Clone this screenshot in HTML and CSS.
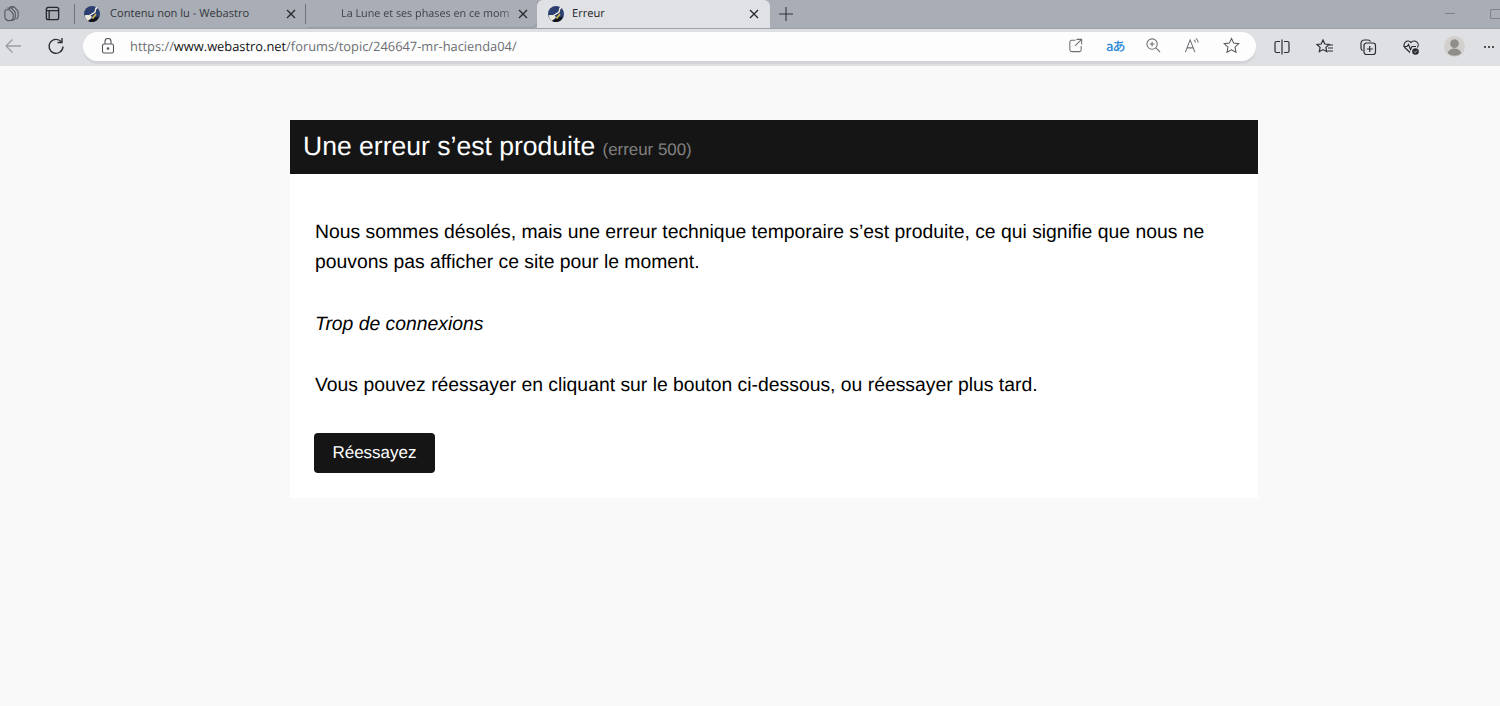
FILE: index.html
```html
<!DOCTYPE html>
<html lang="fr">
<head>
<meta charset="utf-8">
<title>Erreur</title>
<link rel="stylesheet" href="styles.css">
</head>
<body>
<svg class="defs" width="0" height="0" aria-hidden="true">
  <symbol id="fav" viewBox="0 0 18 18">
    <circle cx="9" cy="9" r="8" fill="#2b3f70"/>
    <path d="M1.500 10.500c3-1 6-.5 7.500 1.500l-3 4.300C3.500 15.500 2 13 1.500 10.500z" fill="#e9e6da"/>
    <path d="M5 15.500c3-2 7-3 11-4-1 3-3.500 5.500-7 5.500-1.500 0-3-.5-4-1.500z" fill="#14141a"/>
    <path d="M5 11.500 12 7l1-4" stroke="#f2efe2" stroke-width="1.300" fill="none"/>
    <path d="M9.500 13.500 13 9" stroke="#d9bf3f" stroke-width="1.500" fill="none"/>
    <circle cx="13.500" cy="3" r="1" fill="#f4f0e0"/>
  </symbol>
  <symbol id="close" viewBox="0 0 10 10">
    <path d="M1 1l8 8M9 1l-8 8" stroke="currentColor" stroke-width="1.300" fill="none"/>
  </symbol>
</svg>
<header class="browser">
  <div class="tabstrip">
    <div class="strip-tools">
      <svg class="icon-strip" viewBox="0 0 18 18" fill="none" stroke="#55585e" stroke-width="1.200"><path d="M6 4.500 8 2h3.500l-1 0"/><path d="M8.500 2H11a2 2 0 0 1 1.500.7l3 3.300a2 2 0 0 1 .5 1.400V12a3.500 3.500 0 0 1-2 3.200"/><path d="M4.500 3.200H8a2 2 0 0 1 1.500.6l3 3.200a2 2 0 0 1 .5 1.400v4.100a3.500 3.500 0 0 1-3.500 3.500"/><path d="M3.500 5H6a2 2 0 0 1 1.500.6l2.800 3a2 2 0 0 1 .5 1.400v3a3.500 3.500 0 0 1-3.500 3.500H6A4 4 0 0 1 2 12.500V6.500A1.500 1.500 0 0 1 3.500 5z"/></svg>
      <svg class="icon-strip" viewBox="0 0 18 18" fill="none" stroke="#26282c" stroke-width="1.400"><rect x="2.500" y="2.500" width="13" height="13" rx="2"/><path d="M2.500 6h13M5.500 6v9.500"/></svg>
    </div>
    <span class="sep"></span>
    <div class="tab tab-one">
      <svg class="fav"><use href="#fav"/></svg>
      <span class="tab-title">Contenu non lu - Webastro</span>
      <svg class="close"><use href="#close"/></svg>
    </div>
    <span class="sep"></span>
    <div class="tab tab-two">
      <span class="tab-title tab-title-fade">La Lune et ses phases en ce mom</span>
      <svg class="close"><use href="#close"/></svg>
    </div>
    <div class="tab tab-active">
      <svg class="fav"><use href="#fav"/></svg>
      <span class="tab-title">Erreur</span>
      <svg class="close"><use href="#close"/></svg>
    </div>
    <svg class="new-tab" viewBox="0 0 14 14" fill="none" stroke="#33363a" stroke-width="1.100"><path d="M7 0v14M0 7h14"/></svg>
    <div class="win-controls">
      <span class="win-min"></span>
      <span class="win-max"></span>
    </div>
  </div>
  <div class="toolbar">
    <svg class="nav-icon nav-back" viewBox="0 0 18 18" fill="none" stroke="#9a9da2" stroke-width="1.300"><path d="M17 9H2M8.500 2.500 2 9l6.500 6.500"/></svg>
    <svg class="nav-icon nav-reload" viewBox="0 0 18 18" fill="none" stroke="#2c2e32" stroke-width="1.400"><path d="M14.500 5A7 7 0 1 0 16 9.500"/><path d="M15 1v4.500h-4.500"/></svg>
    <div class="address">
      <svg class="lock" viewBox="0 0 14 16" fill="none" stroke="#55585c" stroke-width="1.100"><rect x="1.500" y="6" width="11" height="9" rx="1.500"/><path d="M4 6V3.500a3 3 0 0 1 6 0V6"/><circle cx="7" cy="10.500" r=".8" fill="#55585c"/></svg>
      <span class="url">https://<b class="url-host">www.webastro.net</b>/forums/topic/246647-mr-hacienda04/</span>
      <div class="address-icons">
        <svg class="a-icon" viewBox="0 0 18 18" fill="none" stroke="#6b6e72" stroke-width="1.100"><path d="M9 3.500H5a2 2 0 0 0-2 2v8a2 2 0 0 0 2 2h8a2 2 0 0 0 2-2v-4"/><path d="M10 2.500h5.500V8M15.500 2.500 8.500 9.500"/></svg>
        <span class="translate">aあ</span>
        <svg class="a-icon" viewBox="0 0 18 18" fill="none" stroke="#6b6e72" stroke-width="1.100"><circle cx="7.500" cy="7.500" r="5.500"/><path d="M11.500 11.500 16 16M7.500 5v5M5 7.500h5"/></svg>
        <svg class="a-icon" viewBox="0 0 18 18" fill="none" stroke="#6b6e72" stroke-width="1.100"><path d="M1.500 16 6.500 3l5 13M3.300 11.500h6.400"/><path d="M10.500 3c1 .7 1.500 1.600 1.500 2.800M12.500 1.500c1.600 1 2.500 2.500 2.500 4.300"/></svg>
        <svg class="a-icon" viewBox="0 0 18 18" fill="none" stroke="#55585c" stroke-width="1.100"><path d="m9 1.500 2.300 5 5.400.6-4 3.700 1.100 5.400L9 13.500l-4.800 2.700 1.100-5.400-4-3.700 5.400-.6z"/></svg>
      </div>
    </div>
    <div class="tool-icons">
      <svg class="t-icon" viewBox="0 0 18 18" fill="none" stroke="#2c2e32" stroke-width="1.200"><path d="M7 3.500H3.500A1.500 1.500 0 0 0 2 5v8a1.500 1.500 0 0 0 1.500 1.500H7M11 3.500h3.500A1.500 1.500 0 0 1 16 5v8a1.500 1.500 0 0 1-1.500 1.500H11M9 1.500v15"/></svg>
      <svg class="t-icon" viewBox="0 0 18 18" fill="none" stroke="#2c2e32" stroke-width="1.200"><path d="m7 2 1.800 4 4.200.5-3.100 2.900.8 4.300L7 11.600l-3.700 2.100.8-4.300L1 6.500 5.200 6zM13 7h4M12 10h5M11.500 13H17"/></svg>
      <svg class="t-icon" viewBox="0 0 18 18" fill="none" stroke="#2c2e32" stroke-width="1.200"><rect x="5" y="5" width="11.500" height="11.500" rx="2.500"/><path d="M10.700 8v6M7.800 11h6M11.500 3.500C11 2.500 10 2 9 2H5.500A3.500 3.500 0 0 0 2 5.500V10c0 1.200.7 2.200 1.500 2.700"/></svg>
      <svg class="t-icon" viewBox="0 0 18 18" fill="none" stroke="#2c2e32" stroke-width="1.200"><path d="M8 14.500 3 9.800a4 4 0 0 1 6-5.300 4 4 0 0 1 6.300 5"/><path d="M1.500 8.500h3.500l1.500-2 2 5 1.500-3h4"/><circle cx="13.500" cy="13.500" r="3.300" fill="#26282c" stroke="none"/><path d="m12 13.500 1.100 1.100 1.900-2" stroke="#dee0e4" stroke-width=".8"/></svg>
      <svg class="avatar" viewBox="0 0 22 22"><circle cx="11" cy="11" r="11" fill="#d2d0cd"/><circle cx="11" cy="8" r="4.500" fill="#918e89"/><path d="M3.800 18c1-3.500 3.800-5 7.200-5s6.200 1.500 7.200 5a11 11 0 0 1-14.400 0z" fill="#918e89"/></svg>
      <span class="more"><i></i><i></i><i></i></span>
    </div>
  </div>
</header>
<main class="page">
  <section class="card">
    <h1 class="card-title">Une erreur s’est produite <small class="card-code">(erreur 500)</small></h1>
    <div class="card-body">
      <p class="msg">Nous sommes désolés, mais une erreur technique temporaire s’est produite, ce qui signifie que nous ne pouvons pas afficher ce site pour le moment.</p>
      <p class="msg msg-em">Trop de connexions</p>
      <p class="msg msg-last">Vous pouvez réessayer en cliquant sur le bouton ci-dessous, ou réessayer plus tard.</p>
      <a class="retry" href="#">Réessayez</a>
    </div>
  </section>
</main>
</body>
</html>
```
FILE: styles.css
```css
* { box-sizing: border-box; }
html, body { margin: 0; height: 100%; overflow: hidden; }
body { background: #f9f9f9; font-family: "Liberation Sans", Arial, sans-serif; color: #000; display: flex; flex-direction: column; text-rendering: geometricPrecision; }
.defs { position: absolute; }
.browser { flex: none; font-family: "Open Sans", "Noto Sans", sans-serif; }
.tabstrip { height: 28px; background: #a9adb5; display: flex; align-items: center; padding-bottom: 1px; }
.strip-tools { width: 74px; display: flex; padding-left: 3px; gap: 24px; flex: none; }
.icon-strip { width: 17px; height: 17px; }
.sep { width: 1px; height: 20px; background: #6f7278; flex: none; }
.tab { height: 27px; display: flex; align-items: center; flex: none; font-size: 11.100px; color: #33363a; }
.tab-one { width: 230px; padding: 0 9px 0 8px; }
.tab-two { width: 231px; padding: 0 9px 0 35px; border-radius: 0 0 6px 0; box-shadow: 1px 1px 0 #9a9da4; font-size: 10.800px; }
.tab-active { width: 233px; height: 28px; margin-bottom: -1px; padding: 0 11px 1px 10px; background: #dfe1e5; color: #222; border-radius: 6px 6px 0 0; }
.fav { width: 18px; height: 18px; flex: none; }
.tab-title { margin-left: 9px; flex: 1; white-space: nowrap; }
.tab-active .tab-title { margin-left: 7px; }
.tab-two .tab-title { margin-left: 0; -webkit-mask-image: linear-gradient(to right, #000 90%, transparent 100%); mask-image: linear-gradient(to right, #000 90%, transparent 100%); }
.tab-title-fade { color: #3f4247; }
.close { width: 10px; height: 10px; flex: none; color: #26282c; }
.new-tab { width: 14px; height: 14px; margin-left: 9px; flex: none; }
.win-controls { margin-left: auto; display: flex; align-items: center; gap: 35px; }
.win-min { width: 10px; height: 1px; background: #7f8288; }
.win-max { width: 10px; height: 10px; border: 1px solid #7f8288; border-right: 0; border-radius: 2px 0 0 2px; }
.toolbar { height: 38px; background: #dee0e4; display: flex; align-items: flex-start; border-top: 1px solid #9ea1a8; }
.nav-icon { width: 18px; height: 18px; margin-top: 8px; flex: none; }
.nav-back { margin-left: 4px; }
.nav-reload { margin-left: 25px; }
.address { width: 1173px; height: 29px; margin: 3px 0 0 18px; background: #fdfdfd; border-radius: 15px; display: flex; align-items: center; padding: 0 16px 0 18px; flex: none; box-shadow: 0 3px 0 #d2d4d8; }
.lock { width: 14px; height: 16px; flex: none; margin-bottom: 1px; }
.url { margin-left: 15px; margin-bottom: 2px; font-size: 12.870px; color: #6b6e72; white-space: nowrap; }
.url-host { font-weight: 400; color: #111; }
.address-icons { margin-left: auto; display: flex; align-items: center; gap: 22px; margin-bottom: 2px; }
.a-icon { width: 17px; height: 17px; }
.translate { color: #2a86d8; font-size: 13px; font-weight: 500; letter-spacing: -1px; width: 17px; white-space: nowrap; font-family: "Noto Sans CJK JP", sans-serif; }
.tool-icons { display: flex; align-items: center; height: 35px; margin-left: 17px; gap: 25px; flex: 1; }
.t-icon { width: 18px; height: 18px; display: block; }
.avatar { width: 21px; height: 21px; margin-left: -1px; }
.more { display: flex; gap: 2px; margin-left: -6px; }
.more i { width: 2px; height: 2px; background: #222; border-radius: 50%; }
.page { flex: 1; padding: 54px 0 0 48px; display: flex; justify-content: center; }
.card { width: 968px; height: 378px; background: #fff; align-self: flex-start; }
.card-title { margin: 0; height: 54px; background: #151515; color: #fff; font-size: 26.550px; font-weight: 400; line-height: 53px; padding-left: 13px; }
.card-code { font-size: 16.900px; color: #808080; }
.card-body { padding: 43px 24px 0 25px; }
.msg { margin: 0 0 32px; font-size: 19.350px; line-height: 30px; }
.msg-em { font-style: italic; }
.msg-last { margin-bottom: 33px; margin-top: -1px; }
.retry { display: block; width: 121px; height: 40px; line-height: 40px; margin-left: -1px; text-align: center; background: #151515; color: #fff; border-radius: 4px; font-size: 17px; text-decoration: none; }
```
